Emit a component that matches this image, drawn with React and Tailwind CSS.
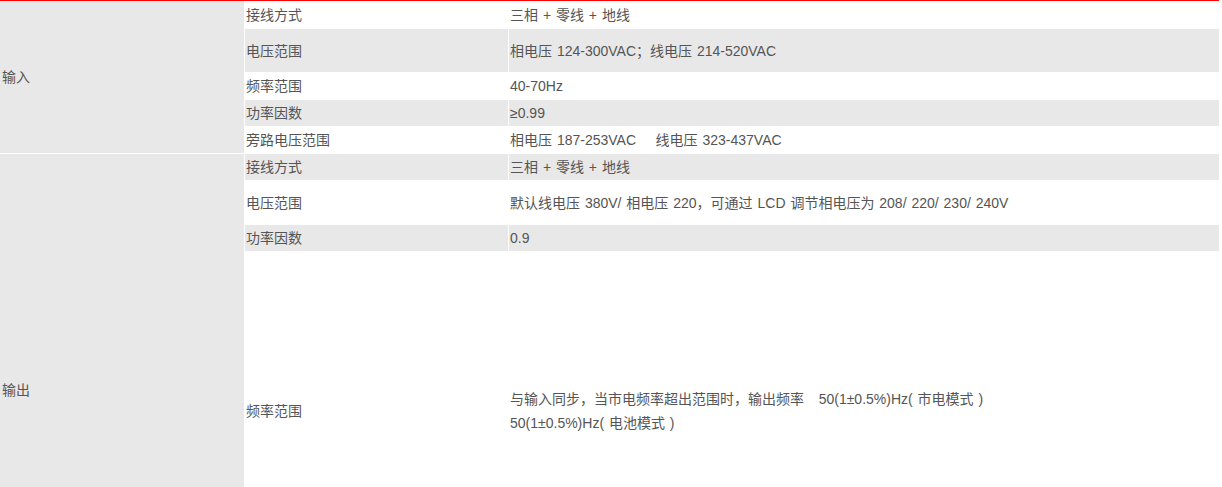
import React from "react";

const GRAY = "bg-[#e8e8e8]";

function Row({ h, gray, label, children }) {
  const bg = gray ? GRAY : "bg-white";
  return (
    <div className="flex gap-px" style={{ height: h }}>
      <div className={`w-[263px] shrink-0 flex items-center pl-[1px] ${bg}`}>{label}</div>
      <div className={`flex-1 flex items-center pl-[1px] whitespace-pre [word-spacing:1px] ${bg}`}>{children}</div>
    </div>
  );
}

export default function App() {
  return (
    <div
      className="w-[1219px] bg-white text-[14px] text-[#555] leading-[24px]"
      style={{ fontFamily: '"Liberation Sans", Arial, "Noto Sans CJK SC", sans-serif' }}
    >
      <div className="h-px bg-[#ff0000]" />
      <div className="flex flex-col gap-px">
        <div className="flex gap-px">
          <div className={`w-[244px] shrink-0 flex items-center pl-[2px] ${GRAY}`}>输入</div>
          <div className="flex-1 flex flex-col gap-px">
            <Row h={27} label="接线方式">三相 + 零线 + 地线</Row>
            <Row h={43} gray label="电压范围">相电压 124-300VAC；线电压 214-520VAC</Row>
            <Row h={26} label="频率范围">40-70Hz</Row>
            <Row h={26} gray label="功率因数">≥0.99</Row>
            <Row h={26} label="旁路电压范围">{"相电压 187-253VAC    线电压 323-437VAC"}</Row>
          </div>
        </div>
        <div className="flex gap-px">
          <div className={`w-[244px] shrink-0 flex items-center pl-[2px] ${GRAY}`}>输出</div>
          <div className="flex-1 flex flex-col gap-px">
            <Row h={26} gray label="接线方式">三相 + 零线 + 地线</Row>
            <Row h={43} label="电压范围">默认线电压 380V/ 相电压 220，可通过 LCD 调节相电压为 208/ 220/ 230/ 240V</Row>
            <Row h={26} gray label="功率因数">0.9</Row>
            <Row h={318} label="频率范围">
              <div>
                <div>{"与输入同步，当市电频率超出范围时，输出频率   50(1±0.5%)Hz( 市电模式 )"}</div>
                <div>{"50(1±0.5%)Hz( 电池模式 )"}</div>
              </div>
            </Row>
            <Row h={55} gray label="" />
          </div>
        </div>
      </div>
    </div>
  );
}
